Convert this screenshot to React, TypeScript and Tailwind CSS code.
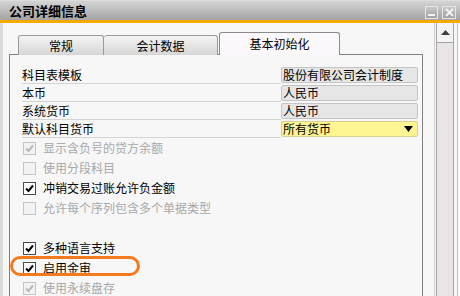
import React from 'react';

const fields = [
    { label: '科目表模板', value: '股份有限公司会计制度' },
    { label: '本币', value: '人民币' },
    { label: '系统货币', value: '人民币' },
];

const checks1 = [
    { text: '显示含负号的贷方余额', checked: true, disabled: true },
    { text: '使用分段科目', checked: false, disabled: true },
    { text: '冲销交易过账允许负金额', checked: true, disabled: false },
    { text: '允许每个序列包含多个单据类型', checked: false, disabled: true },
];

const checks2 = [
    { text: '多种语言支持', checked: true, disabled: false },
    { text: '启用金审', checked: true, disabled: false },
    { text: '使用永续盘存', checked: true, disabled: true },
];

const CheckRow = ({ text, checked, disabled }: { text: string; checked: boolean; disabled: boolean }) => (
    <div className="h-[20px] flex items-center gap-[7px] pl-px">
        <div
            className={`w-[13px] h-[13px] border flex items-center justify-center ${
                disabled ? 'border-[#c4c4c4] bg-[#f2f2f2]' : 'border-[#4a4a4a] bg-white'
            }`}
        >
            {checked && (
                <svg width="11" height="11" viewBox="0 0 11 11">
                    <path
                        d="M2 5.5 L4.5 8 L9 2.5"
                        fill="none"
                        stroke={disabled ? '#b8b8b8' : '#000'}
                        strokeWidth="2"
                    />
                </svg>
            )}
        </div>
        <span className={`text-[12px] leading-none ${disabled ? 'text-[#a8a8a8]' : 'text-black'}`}>{text}</span>
    </div>
);

const App = () => {
    return (
        <div className="relative w-[460px] h-[296px] overflow-hidden bg-[#f7f7f7] font-['Noto_Sans_CJK_SC',sans-serif] select-none">
            {/* Title bar */}
            <div className="h-[20px] flex items-center border-t border-[#dcdcdc] bg-gradient-to-b from-[#d4d4d4] to-[#a4a4a4] pl-[9px] pr-[4px]">
                <span className="text-[13px] font-bold text-black leading-none">公司详细信息</span>
                <div className="ml-auto flex gap-[4px] mt-[3px]">
                    <div className="w-[13px] h-[13px] border border-[#e8e8e8] bg-gradient-to-b from-[#c8c8c8] to-[#a0a0a0] flex items-end justify-center pb-[2px]">
                        <div className="w-[7px] h-[2px] bg-[#f4f4f4]" />
                    </div>
                    <div className="w-[14px] h-[13px] border border-[#e8e8e8] bg-gradient-to-b from-[#c8c8c8] to-[#a0a0a0] flex items-center justify-center">
                        <svg width="9" height="9" viewBox="0 0 9 9">
                            <path d="M1 1 L8 8 M8 1 L1 8" stroke="#f4f4f4" strokeWidth="2" />
                        </svg>
                    </div>
                </div>
            </div>
            <div className="h-[3px] bg-[#f4aa00]" />

            {/* Body */}
            <div className="flex h-[273px]">
                <div className="flex-1 border-l-[3px] border-[#dadada] pl-[6px] pt-[9px]">
                    {/* Tabs */}
                    <div className="flex items-end pl-[9px] -mb-px relative z-10">
                        <div className="w-[86px] h-[20px] border border-[#9a9a9a] border-b-0 rounded-t-[3px] bg-gradient-to-b from-[#f4f4f4] to-[#d6d6d6] flex items-center justify-center text-[12px] text-black">
                            常规
                        </div>
                        <div className="w-[114px] h-[20px] border border-l-0 border-[#9a9a9a] border-b-0 rounded-t-[3px] bg-gradient-to-b from-[#f4f4f4] to-[#d6d6d6] flex items-center justify-center text-[12px] text-black">
                            会计数据
                        </div>
                        <div className="w-[121px] h-[23px] ml-px border border-[#8a8a8a] border-b-0 rounded-t-[3px] bg-[#fbf8fb] flex items-center justify-center text-[12px] text-black">
                            基本初始化
                        </div>
                    </div>

                    {/* Panel */}
                    <div className="w-[414px] h-[300px] border border-[#808080] pl-[12px] pr-[4px] pt-[11px]">
                        {fields.map((f) => (
                            <div key={f.label} className="h-[18px] flex">
                                <div className="flex-1 border-b border-[#d4d4d4] text-[12px] leading-[17px] text-black">
                                    {f.label}
                                </div>
                                <div className="w-[137px] h-[16px] mt-px border border-[#c4c4c4] rounded-[2px] bg-[#e6e6e6] text-[12px] leading-[14px] text-black pl-px">
                                    {f.value}
                                </div>
                            </div>
                        ))}
                        <div className="h-[18px] flex">
                            <div className="flex-1 border-b border-[#d4d4d4] text-[12px] leading-[17px] text-black">
                                默认科目货币
                            </div>
                            <div className="w-[137px] h-[16px] mt-px border border-[#d8d090] rounded-[2px] bg-[#fff592] text-[12px] leading-[14px] text-black pl-px flex items-center justify-between pr-[4px]">
                                <span>所有货币</span>
                                <svg width="9" height="6" viewBox="0 0 9 6">
                                    <path d="M0 0 H9 L4.5 6 Z" fill="#000" />
                                </svg>
                            </div>
                        </div>

                        <div className="flex flex-col">
                            {checks1.map((c) => (
                                <CheckRow key={c.text} {...c} />
                            ))}
                        </div>
                        <div className="flex flex-col mt-[20px]">
                            {checks2.map((c) => (
                                <CheckRow key={c.text} {...c} />
                            ))}
                        </div>
                    </div>
                </div>

                {/* Scrollbar */}
                <div className="w-[26px] flex border-l border-[#d0d0d0] pl-px">
                    <div className="w-[18px] border-x border-[#a4a4a4] flex flex-col">
                        <div className="h-[19px] flex items-center justify-center bg-[#f4f4f4]">
                            <svg width="9" height="5" viewBox="0 0 9 5">
                                <path d="M0 5 L4.5 0 L9 5 Z" fill="#404040" />
                            </svg>
                        </div>
                        <div className="flex-1 border-t border-[#a4a4a4] bg-[#e8e4e8]" />
                    </div>
                    <div className="ml-[3px] w-px bg-[#c4c4c4]" />
                </div>
            </div>

            {/* Highlight */}
            <div className="absolute left-[10px] top-[256px] w-[130px] h-[20px] border-[3px] border-[#f47a1e] rounded-[10px]" />
        </div>
    );
};

export default App;
